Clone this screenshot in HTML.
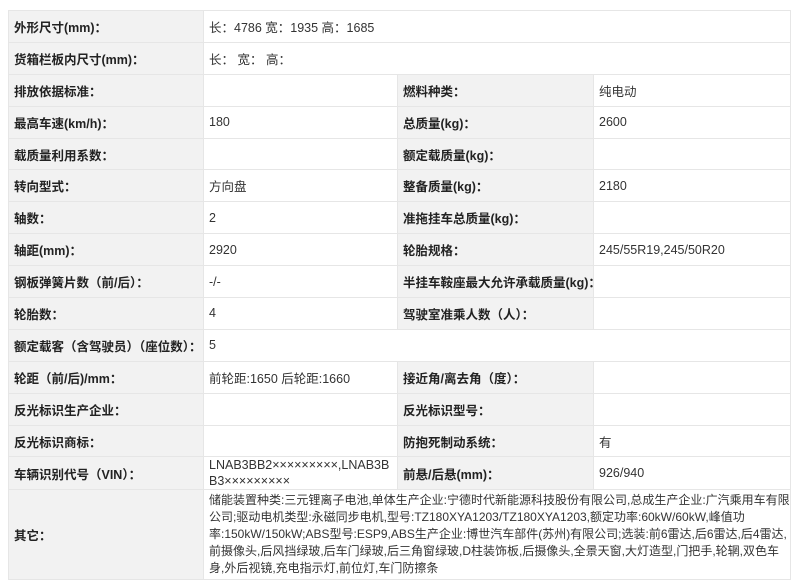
<!DOCTYPE html><html><head><meta charset="utf-8"><style>
body{margin:0;background:#fff;width:800px;height:561px;overflow:hidden;font-family:"Liberation Sans","Noto Sans CJK SC",sans-serif;color:#333;font-size:12.5px}
table{position:absolute;left:8px;top:10px;border-collapse:collapse;table-layout:fixed;width:782px}
td{border:1px solid #e6e6e6;height:31.9px;padding:0 0 0 5px;box-sizing:border-box;vertical-align:middle;white-space:nowrap;overflow:hidden}
td.l{background:#f2f2f2;font-weight:bold;color:#222}
td.v{background:#fff}
</style></head><body>
<table>
<col style="width:195px"><col style="width:194px"><col style="width:196px"><col style="width:197px">
<tr><td class="l">外形尺寸(mm)：</td><td class="v" colspan="3">长：4786 宽：1935 高：1685</td></tr>
<tr><td class="l">货箱栏板内尺寸(mm)：</td><td class="v" colspan="3">长： 宽： 高：</td></tr>
<tr><td class="l">排放依据标准：</td><td class="v"></td><td class="l">燃料种类：</td><td class="v">纯电动</td></tr>
<tr><td class="l">最高车速(km/h)：</td><td class="v">180</td><td class="l">总质量(kg)：</td><td class="v">2600</td></tr>
<tr><td class="l">载质量利用系数：</td><td class="v"></td><td class="l">额定载质量(kg)：</td><td class="v"></td></tr>
<tr><td class="l">转向型式：</td><td class="v">方向盘</td><td class="l">整备质量(kg)：</td><td class="v">2180</td></tr>
<tr><td class="l">轴数：</td><td class="v">2</td><td class="l">准拖挂车总质量(kg)：</td><td class="v"></td></tr>
<tr><td class="l">轴距(mm)：</td><td class="v">2920</td><td class="l">轮胎规格：</td><td class="v">245/55R19,245/50R20</td></tr>
<tr><td class="l">钢板弹簧片数（前/后）：</td><td class="v">-/-</td><td class="l">半挂车鞍座最大允许承载质量(kg)：</td><td class="v"></td></tr>
<tr><td class="l">轮胎数：</td><td class="v">4</td><td class="l">驾驶室准乘人数（人）：</td><td class="v"></td></tr>
<tr><td class="l">额定载客（含驾驶员）（座位数）：</td><td class="v" colspan="3">5</td></tr>
<tr><td class="l">轮距（前/后)/mm：</td><td class="v">前轮距:1650 后轮距:1660</td><td class="l">接近角/离去角（度）：</td><td class="v"></td></tr>
<tr><td class="l">反光标识生产企业：</td><td class="v"></td><td class="l">反光标识型号：</td><td class="v"></td></tr>
<tr><td class="l">反光标识商标：</td><td class="v"></td><td class="l">防抱死制动系统：</td><td class="v">有</td></tr>
<tr><td class="l">车辆识别代号（VIN）：</td><td class="v" style="white-space:normal;word-break:break-all;line-height:16px">LNAB3BB2×××××××××,LNAB3BB3×××××××××</td><td class="l">前悬/后悬(mm)：</td><td class="v">926/940</td></tr>
<tr><td class="l" style="height:90px">其它：</td><td class="v" colspan="3" style="white-space:normal;line-height:17px;vertical-align:top;padding-top:2px;font-size:12px">储能装置种类:三元锂离子电池,单体生产企业:宁德时代新能源科技股份有限公司,总成生产企业:广汽乘用车有限公司;驱动电机类型:永磁同步电机,型号:TZ180XYA1203/TZ180XYA1203,额定功率:60kW/60kW,峰值功率:150kW/150kW;ABS型号:ESP9,ABS生产企业:博世汽车部件(苏州)有限公司;选装:前6雷达,后6雷达,后4雷达,前摄像头,后风挡绿玻,后车门绿玻,后三角窗绿玻,D柱装饰板,后摄像头,全景天窗,大灯造型,门把手,轮辋,双色车身,外后视镜,充电指示灯,前位灯,车门防擦条</td></tr>
</table>
</body></html>
